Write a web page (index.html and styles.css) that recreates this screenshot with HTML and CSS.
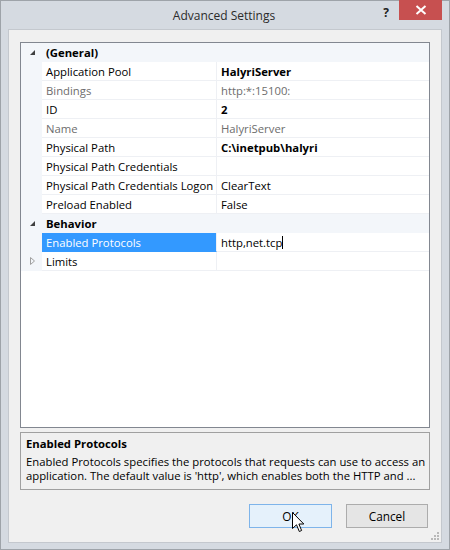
FILE: index.html
```html
<!DOCTYPE html>
<html>
<head>
<meta charset="utf-8">
<link rel="stylesheet" href="styles.css">
</head>
<body>
<div class="window">
  <div class="titlebar">
    <div class="title">Advanced Settings</div>
    <div class="help">?</div>
    <div class="close"><svg width="12" height="10" viewBox="0 0 12 10"><path d="M1.5 1 L10.5 9 M10.5 1 L1.5 9" stroke="#fff" stroke-width="2" fill="none"/></svg></div>
  </div>
  <div class="client">
    <div class="grid">
      <div class="row header">
        <div class="margin"><svg class="exp" width="7" height="7" viewBox="0 0 7 7"><polygon points="6,1 6,6 1,6" fill="#404040"/></svg></div>
        <div class="cat">(General)</div>
      </div>
      <div class="row"><div class="margin"></div><div class="name">Application Pool</div><div class="value bold">HalyriServer</div></div>
      <div class="row"><div class="margin"></div><div class="name ro">Bindings</div><div class="value ro">http:*:15100:</div></div>
      <div class="row"><div class="margin"></div><div class="name">ID</div><div class="value bold">2</div></div>
      <div class="row"><div class="margin"></div><div class="name ro">Name</div><div class="value ro">HalyriServer</div></div>
      <div class="row"><div class="margin"></div><div class="name">Physical Path</div><div class="value bold">C:\inetpub\halyri</div></div>
      <div class="row"><div class="margin"></div><div class="name">Physical Path Credentials</div><div class="value"></div></div>
      <div class="row"><div class="margin"></div><div class="name">Physical Path Credentials Logon</div><div class="value">ClearText</div></div>
      <div class="row"><div class="margin"></div><div class="name">Preload Enabled</div><div class="value">False</div></div>
      <div class="row header">
        <div class="margin"><svg class="exp" width="7" height="7" viewBox="0 0 7 7"><polygon points="6,1 6,6 1,6" fill="#404040"/></svg></div>
        <div class="cat">Behavior</div>
      </div>
      <div class="row"><div class="margin"></div><div class="name selected">Enabled Protocols</div><div class="value"><span>http,net.tcp</span><span class="caret"></span></div></div>
      <div class="row"><div class="margin"><svg class="exp" width="7" height="10" viewBox="0 0 7 10"><polygon points="1.5,1.5 5.5,5 1.5,8.5" fill="none" stroke="#a0a0a0" stroke-width="1"/></svg></div><div class="name">Limits</div><div class="value"></div></div>
    </div>
    <div class="desc">
      <div class="desc-title">Enabled Protocols</div>
      <div class="desc-line">Enabled Protocols specifies the protocols that requests can use to access an</div>
      <div class="desc-line">application. The default value is 'http', which enables both the HTTP and ...</div>
    </div>
    <div class="buttons">
      <div class="btn default">OK
        <svg class="cursor" width="13" height="21" viewBox="0 0 13 21"><path d="M0.5 0.5 L0.5 16.5 L4.5 12.8 L7.3 19.5 L9.6 18.5 L6.9 12 L11.8 12 Z" fill="#fff" stroke="#000" stroke-width="1" stroke-linejoin="miter"/></svg>
      </div>
      <div class="btn">Cancel</div>
    </div>
    <svg class="grip" width="10" height="10" viewBox="0 0 10 10">
      <rect x="7" y="1" width="2" height="2" fill="#b8b8b8"/>
      <rect x="4" y="4" width="2" height="2" fill="#b8b8b8"/>
      <rect x="7" y="4" width="2" height="2" fill="#b8b8b8"/>
      <rect x="1" y="7" width="2" height="2" fill="#b8b8b8"/>
      <rect x="4" y="7" width="2" height="2" fill="#b8b8b8"/>
      <rect x="7" y="7" width="2" height="2" fill="#b8b8b8"/>
    </svg>
  </div>
</div>
</body>
</html>
```
FILE: styles.css
```css
* { box-sizing: border-box; }
html, body { margin: 0; padding: 0; }
body {
  width: 450px;
  height: 550px;
  font-family: "Open Sans", "Noto Sans", sans-serif;
  font-size: 11.3px;
  color: #000;
  overflow: hidden;
}
.window {
  width: 450px;
  height: 550px;
  background: #d5dae1;
  border: 1px solid #9ea3a9;
  display: flex;
  flex-direction: column;
  padding: 0 7px 6px 7px;
}
.titlebar {
  height: 28px;
  position: relative;
  display: flex;
  align-items: center;
  justify-content: center;
  flex: none;
}
.title {
  font-size: 12px;
  color: #2b2b2b;
  margin-top: 0;
  margin-right: 2px;
}
.help {
  position: absolute;
  right: 53px;
  top: 3px;
  font-weight: bold;
  font-size: 12px;
  color: #222;
}
.close {
  position: absolute;
  right: 0;
  top: -1px;
  width: 43px;
  height: 20px;
  background: #c75050;
  display: flex;
  align-items: center;
  justify-content: center;
}
.client {
  flex: 1;
  background: #f0f0f0;
  border: 1px solid #c4c8ce;
  padding: 12px 11px 14px 11px;
  display: flex;
  flex-direction: column;
  position: relative;
}
.grid {
  height: 386px;
  border: 1px solid #828790;
  background: #fff;
  display: flex;
  flex-direction: column;
  flex: none;
}
.row {
  height: 19px;
  display: flex;
  flex: none;
}
.margin {
  width: 21px;
  flex: none;
  background: #f3f6fa;
  position: relative;
}
.exp {
  position: absolute;
  left: 8px;
  top: 6px;
}
.row:last-child .exp { top: 4px; left: 8px; }
.header { background: #f3f6fa; }
.cat {
  font-weight: bold;
  padding-left: 4px;
  line-height: 20px;
}
.name {
  width: 175px;
  flex: none;
  padding-left: 4px;
  line-height: 19px;
  border-bottom: 1px solid #eef0f4;
  border-right: 1px solid #eef0f4;
  white-space: nowrap;
  overflow: hidden;
}
.value {
  flex: 1;
  padding-left: 4px;
  line-height: 19px;
  border-bottom: 1px solid #eef0f4;
  white-space: nowrap;
  display: flex;
  align-items: center;
}
.bold { font-weight: bold; }
.ro { color: #6d6d6d; }
.selected {
  background: #3399ff;
  color: #fff;
  border-bottom-color: #3399ff;
}
.caret {
  display: inline-block;
  width: 1px;
  height: 13px;
  background: #000;
  margin-left: 0;
}
.desc {
  margin-top: 4px;
  height: 58px;
  border: 1px solid #a0a0a0;
  padding: 2px 5px 0 5px;
  flex: none;
}
.desc-title {
  font-weight: bold;
  line-height: 17px;
  margin-bottom: 3px;
}
.desc-line {
  line-height: 14px;
  white-space: nowrap;
}
.buttons {
  margin-top: 14px;
  display: flex;
  justify-content: flex-end;
  gap: 14px;
  padding-right: 2px;
}
.btn {
  width: 83px;
  height: 24px;
  border: 1px solid #acacac;
  background: #e5e5e5;
  display: flex;
  align-items: center;
  justify-content: center;
  font-size: 11.8px;
  position: relative;
}
.btn + .btn { width: 82px; }
.btn.default {
  border-color: #7eb4ea;
  background: #e5f1fb;
}
.cursor {
  position: absolute;
  left: 42px;
  top: 7px;
}
.grip {
  position: absolute;
  right: 1px;
  bottom: 1px;
}
```
